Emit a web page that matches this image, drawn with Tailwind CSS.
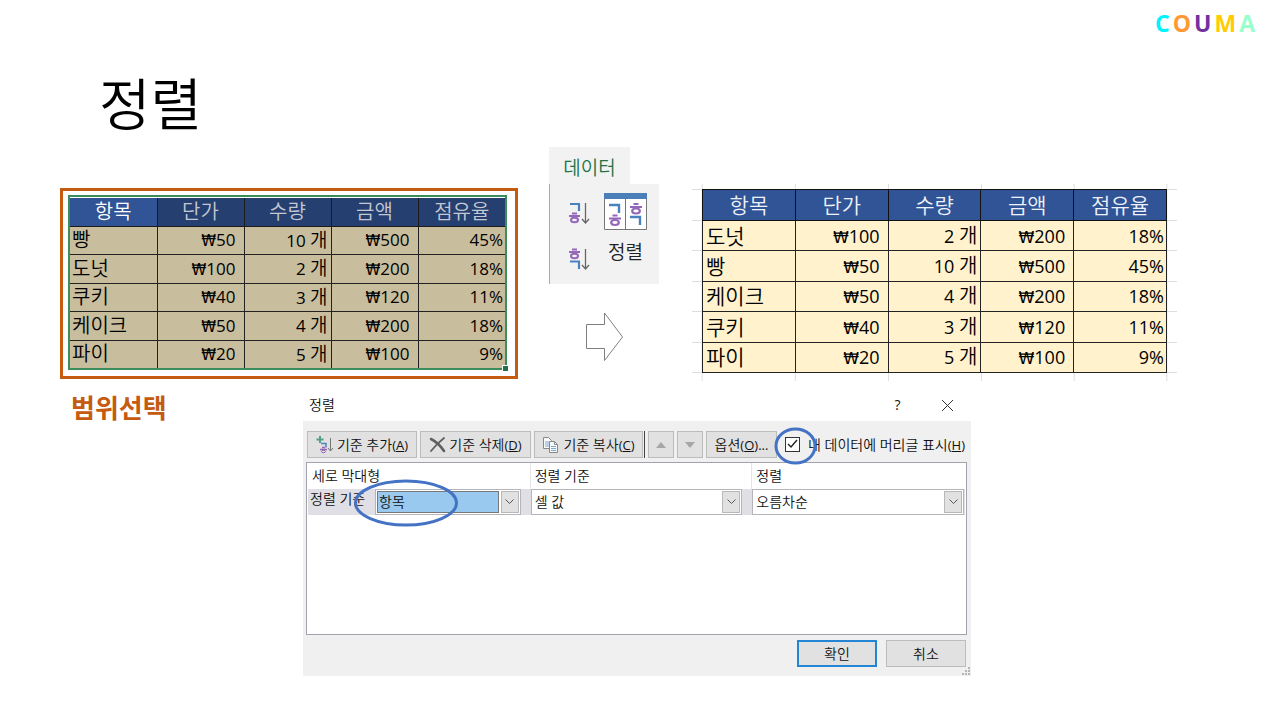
<!DOCTYPE html>
<html lang="ko">
<head>
<meta charset="utf-8">
<meta name="viewport" content="width=device-width, initial-scale=1">
<title>정렬</title>
<script src="https://cdn.jsdelivr.net/npm/@tailwindcss/browser@4"></script>
</head>
<body class="bg-white text-black font-['Open_Sans','Noto_Sans_CJK_KR',sans-serif]">
<div class="min-h-screen overflow-hidden">
  <header class="flex justify-end gap-[3px] pt-[7px] pr-[25px] text-[23px] leading-8 font-bold">
    <span class="text-[#00f4ff]">C</span><span class="text-[#ff9933]">O</span><span class="text-[#7030a0]">U</span><span class="text-[#ffcc00]">M</span><span class="text-[#99ffcc]">A</span>
  </header>
  <main class="pl-[60px] pr-[103px]">
    <h1 class="pl-[39px] pt-[22px] h-[108px] text-[56px] leading-[80px] font-[350] font-['Noto_Sans_CJK_KR',sans-serif]">정렬</h1>

    <div class="grid grid-cols-[458fr_174fr_485fr] items-start">
      <section class="mt-[41px] border-3 border-[#c55a11] pl-[5px] pr-2 pt-1 pb-[6px]">
        <div class="relative border-2 border-[#3c8c5c] pt-px">
          <table class="w-full h-[170px] table-fixed border-collapse text-[17px] leading-6 [&_i]:not-italic [&_i]:text-[15px] [&_i]:leading-5 [&_i]:font-['DejaVu_Sans']">
            <thead>
              <tr class="h-[28px] text-[#c3c8d2] bg-[#253f70] text-[20px]">
                <th class="border-r border-b border-[#1b1b1b] p-0 font-[350] bg-[#305496] text-white">항목</th>
                <th class="border-r border-b border-[#1b1b1b] p-0 font-[350]">단가</th>
                <th class="border-r border-b border-[#1b1b1b] p-0 font-[350]">수량</th>
                <th class="border-r border-b border-[#1b1b1b] p-0 font-[350]">금액</th>
                <th class="border-b border-[#1b1b1b] p-0 font-[350]">점유율</th>
              </tr>
            </thead>
            <tbody class="bg-[#c8bd9d] text-right [&_td]:border-[#222] [&_td]:border-r [&_td]:border-b [&_td]:py-0 [&_td:last-child]:border-r-0 [&_tr:last-child_td]:border-b-0 [&_td:first-child]:text-left [&_td:first-child]:text-[20px] [&_td:first-child]:font-[350] [&_td:first-child]:pl-[2px] [&_td:nth-child(2)]:pr-2 [&_td:nth-child(3)]:pr-[3px] [&_td:nth-child(4)]:pr-2 [&_td:last-child]:pr-[2px]">
              <tr><td>빵</td><td><i>₩</i>50</td><td>10 <span class="text-[19px] font-[350]">개</span></td><td><i>₩</i>500</td><td>45%</td></tr>
              <tr><td>도넛</td><td><i>₩</i>100</td><td>2 <span class="text-[19px] font-[350]">개</span></td><td><i>₩</i>200</td><td>18%</td></tr>
              <tr><td>쿠키</td><td><i>₩</i>40</td><td>3 <span class="text-[19px] font-[350]">개</span></td><td><i>₩</i>120</td><td>11%</td></tr>
              <tr><td>케이크</td><td><i>₩</i>50</td><td>4 <span class="text-[19px] font-[350]">개</span></td><td><i>₩</i>200</td><td>18%</td></tr>
              <tr><td>파이</td><td><i>₩</i>20</td><td>5 <span class="text-[19px] font-[350]">개</span></td><td><i>₩</i>100</td><td>9%</td></tr>
            </tbody>
          </table>
          <span class="absolute -right-[4px] -bottom-[4px] size-[7px] border border-white bg-[#217346]"></span>
        </div>
      </section>

      <section class="flex flex-col items-start pl-[31px]">
        <div class="w-[81px] h-[37px] bg-[#f2f2f2] text-center text-[19px] leading-[42px] font-[350] text-[#217346]">데이터</div>
        <div class="flex w-[110px] h-[100px] border-l border-[#ababab] bg-[#f2f2f2] pl-[19px] pt-[9px]">
          <div class="flex flex-col gap-[18px] pt-[6px]">
            <button type="button" aria-label="오름차순" class="block">
              <svg class="w-[24px] h-[28px]" viewBox="0 0 24 28" fill="none">
                <path d="M1 5h9v7" stroke="#4a82bd" stroke-width="2.200"/>
                <path d="M3 14.500h5M0 17h11" stroke="#9467b8" stroke-width="1.800"/><ellipse cx="5.500" cy="21" rx="3.500" ry="2.300" stroke="#9467b8" stroke-width="2"/>
                <path d="M16.500 4v20M13 20l3.500 4 3.500-4" stroke="#666" stroke-width="1.300"/>
              </svg>
            </button>
            <button type="button" aria-label="내림차순" class="block">
              <svg class="w-[24px] h-[28px]" viewBox="0 0 24 28" fill="none">
                <path d="M3 4.500h5M0 7h11" stroke="#9467b8" stroke-width="1.800"/><ellipse cx="5.500" cy="11" rx="3.500" ry="2.300" stroke="#9467b8" stroke-width="2"/>
                <path d="M1 16.500h9v7.500" stroke="#4a82bd" stroke-width="2.200"/>
                <path d="M16.500 4v20M13 20l3.500 4 3.500-4" stroke="#666" stroke-width="1.300"/>
              </svg>
            </button>
          </div>
          <button type="button" class="ml-[11px] flex flex-col items-center self-start">
            <svg class="w-[43px] h-[37px]" viewBox="0 0 43 37" fill="none">
              <path d="M.500 0v36.500h42V0M21.500 6v30" fill="#fff" stroke="#777"/>
              <path d="M0 0h43v6H0z" fill="#4a7fb8"/>
              <path d="M5 12h10v8M26 24h10v8" stroke="#4a82bd" stroke-width="2.400"/>
              <path d="M8.500 22.500h5M5 25.500h12M29.500 11h5M26 14h12" stroke="#9467b8" stroke-width="2.200"/>
              <ellipse cx="11" cy="29.500" rx="3.800" ry="2.500" stroke="#9467b8" stroke-width="2.200"/><ellipse cx="32" cy="18" rx="3.800" ry="2.500" stroke="#9467b8" stroke-width="2.200"/>
            </svg>
            <span class="mt-[8px] text-[19px] leading-7 font-[350] text-[#222]">정렬</span>
          </button>
        </div>
        <svg class="mt-7 ml-[36px] w-[40px] h-[50px]" viewBox="0 0 40 50" fill="none" stroke="#7f7f7f"><path d="M1.500 12.500h18V1l18 24-18 23.500V36.500h-18z"/></svg>
      </section>

      <section class="relative mt-[37px] px-[10px] pt-[5px] pb-2">
        <svg class="absolute inset-0 size-full" stroke="#dedede" aria-hidden="true">
          <path d="M0 5.500h2000M0 36.500h2000M0 66.500h2000M0 97.500h2000M0 127.500h2000M0 158.500h2000M0 188.500h2000"/>
          <line x1="2.100%" x2="2.100%" y1="0" y2="100%"/><line x1="21.300%" x2="21.300%" y1="0" y2="100%"/><line x1="40.500%" x2="40.500%" y1="0" y2="100%"/><line x1="59.700%" x2="59.700%" y1="0" y2="100%"/><line x1="78.800%" x2="78.800%" y1="0" y2="100%"/><line x1="97.900%" x2="97.900%" y1="0" y2="100%"/>
        </svg>
        <table class="relative w-full h-[184px] table-fixed border-collapse text-[18px] leading-6 [&_i]:not-italic [&_i]:text-[16px] [&_i]:leading-5 [&_i]:font-['DejaVu_Sans']">
          <thead>
            <tr class="h-[31px] bg-[#305496] text-[#eef1f8] text-[21px] [&_th]:border [&_th]:border-[#111] [&_th]:p-0 [&_th]:font-[350]">
              <th>항목</th><th>단가</th><th>수량</th><th>금액</th><th>점유율</th>
            </tr>
          </thead>
          <tbody class="bg-[#fff2cc] text-right [&_td]:border [&_td]:border-[#222] [&_td]:py-0 [&_td:first-child]:text-left [&_td:first-child]:text-[21px] [&_td:first-child]:font-[350] [&_td:first-child]:pl-[3px] [&_td:nth-child(2)]:pr-2 [&_td:nth-child(3)]:pr-[3px] [&_td:nth-child(4)]:pr-2 [&_td:last-child]:pr-[2px]">
            <tr><td>도넛</td><td><i>₩</i>100</td><td>2 <span class="text-[20px] font-[350]">개</span></td><td><i>₩</i>200</td><td>18%</td></tr>
            <tr><td>빵</td><td><i>₩</i>50</td><td>10 <span class="text-[20px] font-[350]">개</span></td><td><i>₩</i>500</td><td>45%</td></tr>
            <tr><td>케이크</td><td><i>₩</i>50</td><td>4 <span class="text-[20px] font-[350]">개</span></td><td><i>₩</i>200</td><td>18%</td></tr>
            <tr><td>쿠키</td><td><i>₩</i>40</td><td>3 <span class="text-[20px] font-[350]">개</span></td><td><i>₩</i>120</td><td>11%</td></tr>
            <tr><td>파이</td><td><i>₩</i>20</td><td>5 <span class="text-[20px] font-[350]">개</span></td><td><i>₩</i>100</td><td>9%</td></tr>
          </tbody>
        </table>
      </section>
    </div>

    <div class="mt-2 flex items-start">
      <p class="w-[243px] shrink-0 pl-[11px] pt-[3px] text-[26px] leading-8 font-bold text-[#c55a11]">범위선택</p>

      <section role="dialog" aria-label="정렬" class="w-full max-w-[668px] text-[14px] leading-5 font-[350] text-[#111]">
        <div class="flex h-8 items-center bg-white pl-[6px] pr-[17px]">
          <h2 class="mr-auto">정렬</h2>
          <button type="button" class="mr-[39px] w-[9px] font-medium">?</button>
          <button type="button" aria-label="닫기"><svg class="size-[13px]" viewBox="0 0 13 13" stroke="#333"><path d="M1 1l11 11M12 1L1 12"/></svg></button>
        </div>
        <div class="relative bg-[#f0f0f0] pt-[10px] pr-1 pb-[9px] pl-[3px]">
          <div class="flex h-[27px] items-stretch pl-px [&>button]:flex [&>button]:items-center [&>button]:justify-center [&>button]:border [&>button]:border-[#bcbcbc] [&>button]:bg-[#e1e1e1] [&>button]:whitespace-nowrap [&_small]:text-[13px] [&_small]:font-normal">
            <button type="button" class="w-[110px] gap-[3px]">
              <svg class="w-[18px] h-[18px]" viewBox="0 0 18 18" fill="none">
                <path d="M4 0v7M.500 3.500h7" stroke="#55a086" stroke-width="2"/><path d="M5 7.500h5v4" stroke="#4a82bd" stroke-width="1.500"/>
                <path d="M6 11.500h3M4 13.500h7" stroke="#9467b8" stroke-width="1.500"/><ellipse cx="7.500" cy="15.500" rx="2" ry="1.200" stroke="#9467b8"/>
                <path d="M14.500 2v13M12 12l2.500 3 2.500-3" stroke="#777"/>
              </svg>
              <span>기준 추가<small>(<u>A</u>)</small></span>
            </button>
            <button type="button" class="ml-[3px] w-[111px] gap-[3px]">
              <svg class="w-[17px] h-[16px]" viewBox="0 0 17 16" fill="none" stroke="#606060" stroke-linecap="round"><path d="M2 2c4 2 9 6 13 12" stroke-width="2.600"/><path d="M15 1C10 5 6 9 2 14" stroke-width="1.800"/></svg>
              <span>기준 삭제<small>(<u>D</u>)</small></span>
            </button>
            <button type="button" class="ml-[3px] w-[109px] gap-1">
              <svg class="w-[17px] h-[18px]" viewBox="0 0 17 18" fill="#fafafa" stroke="#888"><path d="M1.500 1.500h5l3 3v8h-8z"/><path d="M3 6h4M3 8h4M3 10h4" stroke="#79a7d2"/><path d="M7.500 5.500h5l3 3v8h-8z"/><path d="M12.500 5.500v3h3" fill="none"/><path d="M9 10.500h5M9 12.500h5M9 14.500h5" stroke="#79a7d2"/></svg>
              <span>기준 복사<small>(<u>C</u>)</small></span>
            </button>
            <span class="ml-px w-px bg-[#444]"></span>
            <button type="button" aria-label="위로 이동" class="ml-[3px] w-[26px]"><svg class="w-[10px] h-[6px]" viewBox="0 0 10 6" fill="#a6a6a6"><path d="M5 0l5 6H0z"/></svg></button>
            <button type="button" aria-label="아래로 이동" class="ml-[3px] w-[26px]"><svg class="w-[10px] h-[6px]" viewBox="0 0 10 6" fill="#a6a6a6"><path d="M5 6l5-6H0z"/></svg></button>
            <button type="button" class="ml-[3px] w-[71px]"><span>옵션<small>(<u>O</u>)...</small></span></button>
            <label class="relative ml-2 flex items-center gap-2 whitespace-nowrap">
              <input type="checkbox" checked class="size-[15px] appearance-none border border-[#333] bg-white">
              <svg class="pointer-events-none absolute left-[2px] top-2 w-[11px] h-[10px]" viewBox="0 0 11 10" fill="none" stroke="#222" stroke-width="1.400"><path d="M1 5l3 3 6-7"/></svg>
              <span>내 데이터에 머리글 표시<small>(<u>H</u>)</small></span>
              <svg class="pointer-events-none absolute -left-[11px] -top-[4px] w-[43px] h-[38px]" viewBox="0 0 43 38" fill="none" stroke="#4472c4" stroke-width="3"><ellipse cx="21.500" cy="19" rx="19.500" ry="17"/></svg>
            </label>
          </div>

          <div class="mt-1 h-[173px] border border-[#a0a4ac] bg-white px-px">
            <div class="grid grid-cols-[222fr_222fr_214fr] h-[26px] items-center">
              <span class="pl-1">세로 막대형</span>
              <span class="border-l border-[#e5e5e5] pl-1 leading-[26px]">정렬 기준</span>
              <span class="border-l border-[#e5e5e5] pl-1 leading-[26px]">정렬</span>
            </div>
            <div class="grid grid-cols-[222fr_222fr_214fr] h-[26px] bg-[#dfdfe5]">
              <div class="relative flex pr-[9px]">
                <label for="key" class="w-[67px] shrink-0 pl-[2px] leading-[20px] whitespace-nowrap">정렬 기준</label>
                <div class="relative flex-1 border border-[#b4b4ba] bg-white p-px">
                  <select id="key" class="block h-[22px] w-[calc(100%-20px)] appearance-none border border-[#777] bg-[#99c9ef] pl-px leading-5"><option>항목</option></select>
                  <span class="pointer-events-none absolute top-px right-px flex h-[22px] w-[18px] items-center justify-center border border-[#b8b8b8] bg-[#e1e1e1]"><svg class="w-[9px] h-[6px]" viewBox="0 0 9 6" fill="none" stroke="#555"><path d="M.500.500l4 4 4-4"/></svg></span>
                </div>
                <svg class="pointer-events-none absolute left-[45px] -top-[10px] w-[106px] h-[48px]" viewBox="0 0 106 48" fill="none" stroke="#4472c4" stroke-width="3"><ellipse cx="53" cy="24" rx="50.500" ry="22"/></svg>
              </div>
              <div class="pl-px pr-[9px]">
                <div class="relative border border-[#b4b4ba] bg-white p-px">
                  <select aria-label="정렬 기준" class="block h-[22px] w-full appearance-none pl-[2px] leading-5"><option>셀 값</option></select>
                  <span class="pointer-events-none absolute top-px right-px flex h-[22px] w-[18px] items-center justify-center border border-[#b8b8b8] bg-[#e1e1e1]"><svg class="w-[9px] h-[6px]" viewBox="0 0 9 6" fill="none" stroke="#555"><path d="M.500.500l4 4 4-4"/></svg></span>
                </div>
              </div>
              <div class="pl-px pr-px">
                <div class="relative border border-[#b4b4ba] bg-white p-px">
                  <select aria-label="정렬" class="block h-[22px] w-full appearance-none pl-[2px] leading-5"><option>오름차순</option></select>
                  <span class="pointer-events-none absolute top-px right-px flex h-[22px] w-[18px] items-center justify-center border border-[#b8b8b8] bg-[#e1e1e1]"><svg class="w-[9px] h-[6px]" viewBox="0 0 9 6" fill="none" stroke="#555"><path d="M.500.500l4 4 4-4"/></svg></span>
                </div>
              </div>
            </div>
          </div>

          <div class="mt-[5px] flex justify-end gap-[9px] pr-px">
            <button type="button" class="h-[27px] w-20 border-2 border-[#2585d5] bg-[#e1e1e1]">확인</button>
            <button type="button" class="h-[27px] w-20 border border-[#bcbcbc] bg-[#e1e1e1]">취소</button>
          </div>
          <svg class="absolute right-0 bottom-0 size-[9px]" viewBox="0 0 9 9" fill="#b5b5b5" aria-hidden="true"><path d="M0 6h2v2H0zM3 6h2v2H3zM6 6h2v2H6zM3 3h2v2H3zM6 3h2v2H6zM6 0h2v2H6z"/></svg>
        </div>
      </section>
    </div>
  </main>
</div>
</body>
</html>
